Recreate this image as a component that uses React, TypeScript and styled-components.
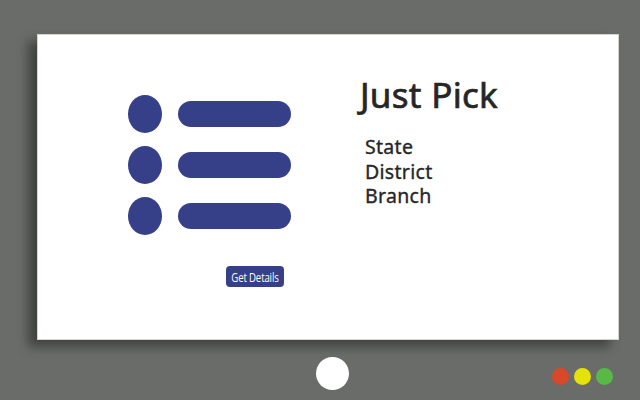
import React from "react";
import styled, { createGlobalStyle } from "styled-components";

const Global = createGlobalStyle`
  html, body { margin: 0; padding: 0; }
  body { background: #6a6c69; width: 640px; height: 400px; overflow: hidden; }
`;

const Device = styled.div`
  width: 640px;
  height: 400px;
  box-sizing: border-box;
  padding: 34px 21px 0 37px;
  display: flex;
  flex-direction: column;
`;

const Screen = styled.div`
  width: 582px;
  height: 306px;
  box-sizing: border-box;
  background: #ffffff;
  border: 1px solid #d4d4d2;
  box-shadow: -9px 7px 10px rgba(0, 0, 0, 0.38);
  display: flex;
  align-items: flex-start;
`;

const LeftPane = styled.div`
  width: 283px;
  padding: 60px 0 0 90px;
  box-sizing: border-box;
  display: flex;
  flex-direction: column;
`;

const List = styled.div`
  display: flex;
  flex-direction: column;
  gap: 13px;
`;

const Row = styled.div`
  display: flex;
  align-items: center;
  gap: 16px;
`;

const Bullet = styled.div`
  width: 34px;
  height: 38px;
  border-radius: 50%;
  background: #354088;
`;

const Bar = styled.div`
  width: 113px;
  height: 26px;
  border-radius: 13px;
  background: #354088;
`;

const Button = styled.button`
  margin: 31px 0 0 98px;
  width: 58px;
  height: 21px;
  padding: 0;
  border: none;
  border-radius: 4px;
  background: #354088;
  color: #ffffff;
  display: flex;
  align-items: center;
  justify-content: center;
  overflow: hidden;
`;

const ButtonLabel = styled.span`
  display: inline-block;
  font-family: "Open Sans", "Noto Sans", sans-serif;
  font-size: 13px;
  font-weight: 500;
  letter-spacing: -0.2px;
  white-space: nowrap;
  transform: scaleX(0.74);
`;

const RightPane = styled.div`
  padding: 37px 0 0 39px;
  display: flex;
  flex-direction: column;
  font-family: "Noto Sans", "Open Sans", sans-serif;
  color: #262626;
`;

const Title = styled.h1`
  margin: 0;
  font-size: 35px;
  font-weight: 400;
  line-height: 46px;
  letter-spacing: 0.3px;
  -webkit-text-stroke: 0.7px #262626;
`;

const Items = styled.div`
  margin: 17px 0 0 5px;
  display: flex;
  flex-direction: column;
`;

const Item = styled.div`
  font-size: 19.5px;
  font-weight: 400;
  line-height: 24.5px;
  letter-spacing: 0.3px;
  -webkit-text-stroke: 0.35px #262626;
`;

const BottomBar = styled.div`
  display: flex;
  align-items: flex-start;
  padding: 17px 6px 0 279px;
`;

const HomeButton = styled.div`
  width: 33px;
  height: 33px;
  border-radius: 50%;
  background: #ffffff;
`;

const Lights = styled.div`
  margin: 11px 0 0 auto;
  display: flex;
  gap: 5px;
`;

const Light = styled.div<{ $color: string }>`
  width: 17px;
  height: 17px;
  border-radius: 50%;
  background: ${(p) => p.$color};
`;

export default function App() {
  return (
    <>
      <Global />
      <Device>
        <Screen>
          <LeftPane>
            <List>
              {[0, 1, 2].map((i) => (
                <Row key={i}>
                  <Bullet />
                  <Bar />
                </Row>
              ))}
            </List>
            <Button>
              <ButtonLabel>Get Details</ButtonLabel>
            </Button>
          </LeftPane>
          <RightPane>
            <Title>Just Pick</Title>
            <Items>
              <Item>State</Item>
              <Item>District</Item>
              <Item>Branch</Item>
            </Items>
          </RightPane>
        </Screen>
        <BottomBar>
          <HomeButton />
          <Lights>
            <Light $color="#d9482a" />
            <Light $color="#e5e20a" />
            <Light $color="#58b947" />
          </Lights>
        </BottomBar>
      </Device>
    </>
  );
}
